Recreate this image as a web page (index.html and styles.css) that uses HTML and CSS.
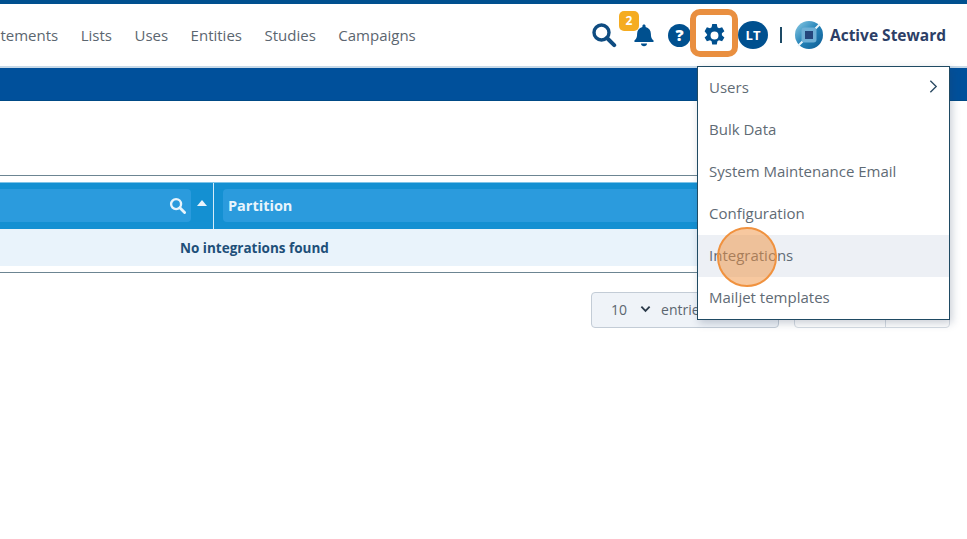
FILE: index.html
```html
<!DOCTYPE html>
<html lang="en">
<head>
<meta charset="utf-8">
<title>Integrations</title>
<link rel="stylesheet" href="styles.css">
</head>
<body>
<header class="topbar">
  <nav class="nav">
    <a>Statements</a><a>Lists</a><a>Uses</a><a>Entities</a><a>Studies</a><a>Campaigns</a>
  </nav>
  <div class="tools">
    <svg class="i-search" viewBox="0 0 26 26" width="26" height="26"><circle cx="10.5" cy="10.5" r="7.5" fill="none" stroke="#0f4c81" stroke-width="3.4"/><path d="M16 16l7.2 7.2" stroke="#0f4c81" stroke-width="4" stroke-linecap="round"/></svg>
    <div class="bell">
      <svg viewBox="0 0 22 24" width="22" height="24"><path d="M11 1.5c1 0 1.6.7 1.6 1.7v.8c3.4.8 5.3 3.5 5.3 6.9 0 4 1.300 5.300 2.600 6.600.5.500.2 1.500-.6 1.500H2.100c-.8 0-1.100-1-.6-1.500 1.300-1.300 2.600-2.600 2.600-6.600 0-3.400 1.900-6.100 5.300-6.900v-.8c0-1 .6-1.700 1.600-1.700z" fill="#00508f"/><path d="M8 20.500h6c0 1.700-1.300 2.800-3 2.800s-3-1.100-3-2.800z" fill="#00508f"/></svg>
      <span class="badge">2</span>
    </div>
    <span class="help">?</span>
    <svg class="i-gear" viewBox="0 0 24 24" width="25" height="25"><path fill="#00508f" fill-rule="evenodd" d="M9.800 1h4.400l.6 3.100 1.500.9 3-1 2.200 3.800-2.400 2.100v1.800l2.400 2.100-2.200 3.800-3-1-1.500.9-.6 3.100H9.800l-.6-3.100-1.500-.9-3 1-2.200-3.800 2.400-2.100V11L2.500 7.800 4.700 4l3 1 1.500-.9zM12 8.200a3.800 3.800 0 1 0 0 7.600 3.800 3.800 0 0 0 0-7.600z"/></svg>
    <span class="avatar">LT</span>
    <span class="sep"></span>
    <svg class="logo" viewBox="0 0 28 28" width="28" height="28"><defs><linearGradient id="lg" x1="0" y1="0" x2="1" y2="1"><stop offset="0" stop-color="#8fcde6"/><stop offset=".5" stop-color="#2483b8"/><stop offset="1" stop-color="#0c5a92"/></linearGradient></defs><circle cx="14" cy="14" r="14" fill="url(#lg)"/><path d="M3 25l6.500-6.500M25 3l-6.500 6.500" stroke="#e8f4fa" stroke-width="2"/><rect x="6.500" y="6.500" width="15" height="15" rx="3" fill="#6fb0d6"/><rect x="10" y="10" width="8" height="8" fill="#24467c"/></svg>
    <span class="brand">Active Steward</span>
  </div>
</header>
<div class="band"></div>
<main class="content">
  <div class="table">
    <div class="thead">
      <div class="th th-first">
        <div class="th-inner"><svg viewBox="0 0 18 18" width="17" height="17"><circle cx="7.500" cy="7.500" r="5.300" fill="none" stroke="#e8f4fc" stroke-width="2.500"/><path d="M11.500 11.500l5 5" stroke="#e8f4fc" stroke-width="3" stroke-linecap="round"/></svg></div>
        <span class="sort"></span>
      </div>
      <div class="th th-second"><div class="th-inner th-label">Partition</div></div>
    </div>
    <div class="empty"><span class="empty-text">No integrations found</span></div>
  </div>
  <div class="pager">
    <div class="length"><span class="len-val">10</span><svg viewBox="0 0 12 8" width="11" height="8"><path d="M1.500 1.500L6 6l4.500-4.500" fill="none" stroke="#2b3a4a" stroke-width="2"/></svg><span class="len-text">entries per page</span></div>
    <div class="pages"><span class="page-a"></span><span class="page-b"></span></div>
  </div>
</main>
<span class="focus-ring"></span>
<ul class="menu">
  <li>Users<svg viewBox="0 0 10 16" width="9" height="15"><path d="M1.500 1.500L8 8l-6.500 6.500" fill="none" stroke="#2a4a63" stroke-width="1.500"/></svg></li>
  <li>Bulk Data</li>
  <li>System Maintenance Email</li>
  <li>Configuration</li>
  <li class="hover">Integrations</li>
  <li>Mailjet templates</li>
</ul>
<span class="click-dot"></span>
</body>
</html>
```
FILE: styles.css
```css
* { box-sizing: border-box; }
html, body { margin: 0; height: 100%; }
body {
  width: 967px;
  height: 539px;
  overflow: hidden;
  position: relative;
  background: #fff;
  font-family: "Open Sans", "Liberation Sans", sans-serif;
  color: #5b6670;
}
.topbar {
  height: 68px;
  border-top: 4px solid #00508f;
  border-bottom: 2px solid #c7d9e8;
  display: flex;
  align-items: center;
  justify-content: space-between;
  padding-right: 21px;
  background: #fff;
}
.nav {
  display: flex;
  gap: 22.500px;
  margin-left: -21.500px;
  font-size: 15px;
  color: #5b6670;
  padding-bottom: 1px;
}
.tools { display: flex; align-items: center; }
.i-search { margin-right: 16px; margin-top: -1px; }
.bell { position: relative; width: 22px; height: 24px; margin-right: 13px; }
.bell svg { display: block; }
.badge {
  position: absolute;
  left: -14px;
  top: -12px;
  width: 20px;
  height: 20px;
  border-radius: 5px;
  background: #f5ac21;
  color: #fff;
  font-size: 12px;
  font-weight: 700;
  text-align: center;
  line-height: 19px;
}
.help {
  width: 23px;
  height: 23px;
  border-radius: 50%;
  background: #00508f;
  color: #fff;
  font-size: 16px;
  font-weight: 800;
  text-align: center;
  line-height: 23px;
  margin-right: 11px;
}
.i-gear { margin-right: 11px; }
.avatar {
  width: 30px;
  height: 28px;
  border-radius: 50%;
  background: #00508f;
  color: #fff;
  font-size: 13px;
  font-weight: 700;
  text-align: center;
  line-height: 28px;
  margin-right: 12px;
}
.sep { width: 2px; height: 16px; background: #1d4a66; margin-right: 13px; }
.logo { margin-right: 7px; }
.brand { font-size: 15.500px; font-weight: 700; color: #2c3e66; }
.band { height: 33px; background: #00509b; border-bottom: 1px solid #004a86; }
.content { padding-top: 74px; overflow: hidden; }
.table {
  width: 950px;
  height: 98px;
  border-top: 1px solid #6c8592;
  border-bottom: 1px solid #6c8592;
  padding-top: 6px;
}
.thead { display: flex; height: 47px; background: #1490d2; border-top: 1px solid #7fc4e8; padding-bottom: 2px; }
.th { display: flex; align-items: center; }
.th-first { width: 214px; padding-right: 1px; position: relative; }
.th-first::after {
  content: "";
  position: absolute;
  right: 0;
  top: 0;
  bottom: -2px;
  width: 1px;
  background: #d5ecf8;
}
.th-first .th-inner {
  flex: 1;
  justify-content: flex-end;
  padding-right: 5px;
  border-radius: 0 4px 4px 0;
}
.th-second { flex: 1; padding: 0 0 0 9px; }
.th-inner {
  display: flex;
  align-items: center;
  height: 33px;
  background: #2b9bdd;
  border-radius: 4px;
}
.th-second .th-inner { flex: 1; padding-left: 5px; }
.th-label { color: #e8f4fc; font-size: 14.500px; font-weight: 700; }
.sort {
  width: 22px;
  flex: none;
  display: flex;
  justify-content: center;
  margin-top: -4px;
}
.sort::before {
  content: "";
  width: 0;
  height: 0;
  border-left: 5.500px solid transparent;
  border-right: 5.500px solid transparent;
  border-bottom: 6px solid #e8f4fc;
}
.empty {
  height: 37px;
  background: #e9f3fb;
  display: flex;
  align-items: center;
  padding-left: 180px;
}
.empty-text { font-size: 13.500px; font-weight: 700; color: #1d4f79; }
.pager {
  display: flex;
  justify-content: flex-end;
  gap: 15px;
  margin-top: 19px;
  width: 950px;
}
.length {
  width: 188px;
  height: 36px;
  border: 1px solid #c3ccd6;
  border-radius: 4px;
  background: #eff3f8;
  display: flex;
  align-items: center;
  padding-left: 19px;
  padding-bottom: 2px;
  font-size: 14px;
  color: #5b6670;
  white-space: nowrap;
  overflow: hidden;
}
.len-val { margin-right: 13px; }
.len-text { margin-left: 10px; }
.pages {
  display: flex;
  width: 156px;
  height: 36px;
  border: 1px solid #d5dbe2;
  border-radius: 4px;
}
.page-a { width: 91px; border-right: 1px solid #d5dbe2; }
.page-b { flex: 1; }
.menu {
  position: absolute;
  left: 697px;
  top: 66px;
  width: 253px;
  margin: 0;
  padding: 0;
  list-style: none;
  background: #fff;
  border: 1px solid #1f4a63;
  box-shadow: 2px 3px 8px rgba(40, 60, 90, .25);
  font-size: 15px;
  color: #5f6b75;
}
.menu li {
  height: 42px;
  display: flex;
  align-items: center;
  justify-content: space-between;
  padding: 0 11px 2px;
}
.menu li svg { margin-top: -2px; }
.menu .hover { background: #edf0f5; }
.focus-ring {
  position: absolute;
  left: 690px;
  top: 9px;
  width: 48px;
  height: 48px;
  border: 6px solid #e98f40;
  border-radius: 10px;
}
.click-dot {
  position: absolute;
  left: 717px;
  top: 227px;
  width: 60px;
  height: 60px;
  border-radius: 50%;
  border: 2px solid #f0923f;
  background: rgba(240, 146, 63, .5);
}
```
